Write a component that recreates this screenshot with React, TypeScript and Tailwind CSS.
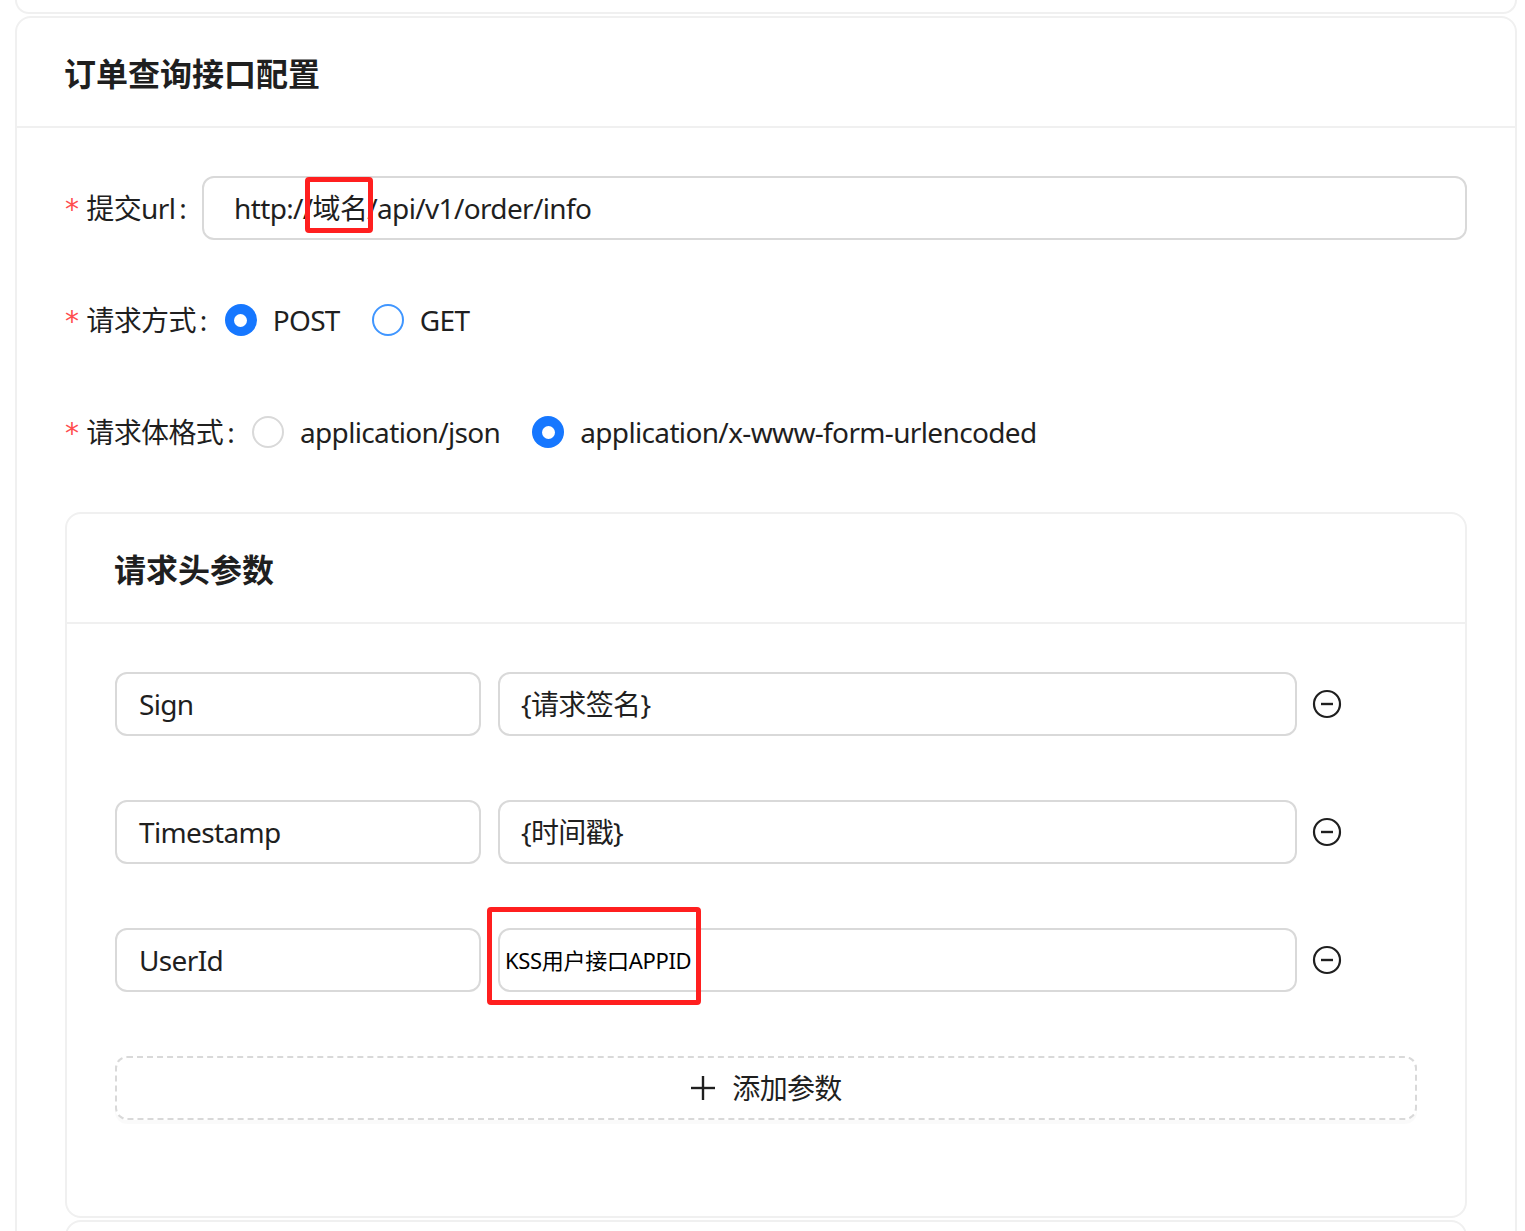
import React from 'react';

const font = 'font-["Noto_Sans","Noto_Sans_CJK_SC",sans-serif]';

const Label: React.FC<{ text: string }> = ({ text }) => (
  <div className="flex items-center shrink-0 text-[28px] text-[#1f1f1f]">
    <span className='text-[#ff4d4f] mr-[8px] text-[28px] font-["DejaVu_Sans",sans-serif] leading-none translate-y-[2px]'>*</span>
    <span>{text}</span>
    <span className="ml-[4px] mr-[18px]">:</span>
  </div>
);

const Radio: React.FC<{ label: string; checked?: boolean; hover?: boolean }> = ({ label, checked, hover }) => (
  <label className="flex items-center mr-[16px] cursor-pointer">
    {checked ? (
      <span className="w-[32px] h-[32px] rounded-full bg-[#1677ff] flex items-center justify-center">
        <span className="w-[13px] h-[13px] rounded-full bg-white" />
      </span>
    ) : (
      <span className={`w-[32px] h-[32px] rounded-full border-2 bg-white ${hover ? 'border-[#4096ff]' : 'border-[#d9d9d9]'}`} />
    )}
    <span className="px-[16px] text-[28px] text-[#1f1f1f]">{label}</span>
  </label>
);

const MinusCircle = () => (
  <svg width="30" height="30" viewBox="0 0 30 30" className="shrink-0 ml-[15px]">
    <circle cx="15" cy="15" r="13" fill="none" stroke="#1f1f1f" strokeWidth="2.2" />
    <line x1="9" y1="15" x2="21" y2="15" stroke="#1f1f1f" strokeWidth="2.4" />
  </svg>
);

const ParamRow: React.FC<{ k: string; v: string; small?: boolean }> = ({ k, v, small }) => (
  <div className="flex items-center h-[64px]">
    <div className="w-[366px] h-[64px] border-2 border-[#d9d9d9] rounded-[12px] flex items-center px-[22px] text-[28px] text-[#1f1f1f]">
      {k}
    </div>
    <div
      className={`ml-[17px] w-[799px] h-[64px] border-2 border-[#d9d9d9] rounded-[12px] flex items-center ${
        small ? 'pl-[5px] text-[22px] tracking-[-0.3px] text-black' : 'pl-[21px] text-[28px] text-[#1f1f1f]'
      }`}
    >
      {v}
    </div>
    <MinusCircle />
  </div>
);

export default function App() {
  return (
    <div className={`${font} tracking-[-0.65px] bg-white min-h-screen pl-[15px] pr-[8px] relative`}>
      {/* previous card tail */}
      <div className="h-[14px] border-x-2 border-b-2 border-[#f0f0f0] rounded-b-[16px]" />

      <div className="mt-[2px] border-2 border-[#f0f0f0] rounded-[16px] bg-white">
        <div className="h-[110px] flex items-center px-[47px] border-b-2 border-[#f0f0f0]">
          <h2 className="text-[32px] font-bold tracking-normal text-[#1f1f1f] translate-y-[2px]">订单查询接口配置</h2>
        </div>

        <div className="px-[48px] pt-[48px] flex flex-col gap-[48px]">
          <div className="flex items-center h-[64px]">
            <Label text="提交url" />
            <div className="flex-1 -ml-[2px] h-[64px] border-2 border-[#d9d9d9] rounded-[12px] flex items-center pl-[30px] text-[28px] text-[#1f1f1f]">
              http://域名/api/v1/order/info
            </div>
          </div>

          <div className="flex items-center h-[64px]">
            <Label text="请求方式" />
            <Radio label="POST" checked />
            <Radio label="GET" hover />
          </div>

          <div className="flex items-center h-[64px]">
            <Label text="请求体格式" />
            <Radio label="application/json" />
            <Radio label="application/x-www-form-urlencoded" checked />
          </div>

          <div className="border-2 border-[#f0f0f0] rounded-[16px] bg-white">
            <div className="h-[110px] flex items-center px-[47px] border-b-2 border-[#f0f0f0]">
              <h3 className="text-[32px] font-bold tracking-normal text-[#1f1f1f] translate-y-[2px]">请求头参数</h3>
            </div>
            <div className="px-[48px] pt-[48px] pb-[96px] flex flex-col gap-[64px]">
              <ParamRow k="Sign" v="{请求签名}" />
              <ParamRow k="Timestamp" v="{时间戳}" />
              <ParamRow k="UserId" v="KSS用户接口APPID" small />
              <button className="h-[64px] w-full border-2 border-dashed border-[#d9d9d9] rounded-[12px] flex items-center justify-center gap-[16px] text-[28px] text-[#1f1f1f] shadow-[0_4px_0_rgba(0,0,0,0.02)]">
                <svg width="26" height="26" viewBox="0 0 26 26">
                  <line x1="13" y1="1" x2="13" y2="25" stroke="#1f1f1f" strokeWidth="2.4" />
                  <line x1="1" y1="13" x2="25" y2="13" stroke="#1f1f1f" strokeWidth="2.4" />
                </svg>
                <span>添加参数</span>
              </button>
            </div>
          </div>

          <div className="-mt-[46px] h-[200px] border-2 border-[#f0f0f0] rounded-[16px]" />
        </div>
      </div>

      {/* annotation boxes */}
      <div className="absolute left-[305px] top-[177px] w-[68px] h-[56px] border-[5px] border-[#ff1f1f] rounded-[4px] pointer-events-none" />
      <div className="absolute left-[487px] top-[907px] w-[214px] h-[98px] border-[5px] border-[#ff1f1f] rounded-[4px] pointer-events-none" />
    </div>
  );
}
